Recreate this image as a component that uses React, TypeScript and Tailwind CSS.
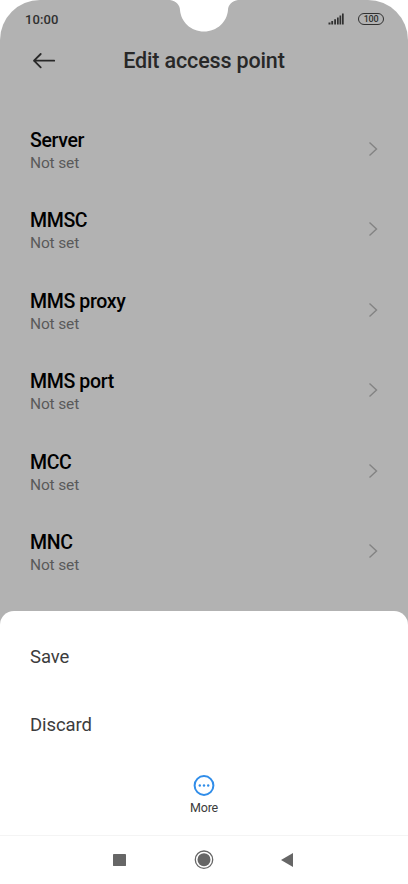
const settings = ["Server", "MMSC", "MMS proxy", "MMS port", "MCC", "MNC"];

function StatusBar() {
  return (
    <div className="relative flex h-[38px] items-center justify-between pl-[25px] pr-6 text-[#303030]">
      <span className="pt-[2px] text-[13px] font-medium leading-4 tracking-[0.1px]">10:00</span>
      <svg className="absolute left-[168px] top-0" width="72" height="32" viewBox="0 0 72 32" fill="#fff">
        <path d="M2 0C8 1 12 5 12 10C13 22 23 31.500 36 31.500C49 31.500 59 22 60 10C60 5 64 1 70 0Z" />
      </svg>
      <div className="flex items-center gap-[14px]">
        <svg width="16" height="12" viewBox="0 0 16 12" fill="#303030">
          <path d="M.5 9.500H2.500V11.500H.5zM3.300 8H5.100V11.500H3.300zM6.200 6.200H8V11.500H6.200zM9 4.500H10.700V11.500H9zM11.500 2.500H13.200V11.500H11.500zM14 .5H15.700V11.500H14z" />
        </svg>
        <span className="flex h-[12px] w-[26px] items-center justify-center rounded-full border border-[#303030] text-[9px] font-medium leading-none tracking-[-0.3px]">
          100
        </span>
      </div>
    </div>
  );
}

function Header() {
  return (
    <header className="grid h-[45px] grid-cols-[88px_1fr_88px] items-center">
      <svg className="ml-8" width="24" height="18" viewBox="0 0 24 18" fill="none" stroke="#282828" strokeWidth="1.800" strokeLinecap="round" strokeLinejoin="round">
        <path d="M22.200 8.700H2M8.700 2L2 8.700L8.700 15.400" />
      </svg>
      <h1 className="whitespace-nowrap text-center text-[21.500px] font-medium leading-6 tracking-[-0.15px] text-[#282828]">Edit access point</h1>
    </header>
  );
}

function SettingRow({ title }: { title: string }) {
  return (
    <li className="flex h-[80.500px] items-center justify-between pl-[30px] pr-[30px]">
      <div className="pt-[3px]">
        <div className="pt-px text-[19.500px] font-medium leading-6 tracking-[-0.35px] text-black">{title}</div>
        <div className="-mt-px text-[15.500px] leading-[22px] tracking-[-0.15px] text-[#5a5a5a]">Not set</div>
      </div>
      <svg className="-mt-px" width="10" height="16" viewBox="0 0 10 16" fill="none" stroke="#838383" strokeWidth="1.400">
        <path d="M1.500 1.500L8.500 8L1.500 14.500" />
      </svg>
    </li>
  );
}

export default function App() {
  return (
    <div className="h-[884px] w-[408px] overflow-hidden bg-white font-['Roboto',sans-serif]">
      <div className="flex h-full flex-col rounded-t-[40px] bg-[#b2b2b2]">
        <StatusBar />
        <Header />
        <ul className="mt-[26px] h-[502px] shrink-0">
          {settings.map((title) => (
            <SettingRow key={title} title={title} />
          ))}
        </ul>
        <div className="flex flex-1 flex-col rounded-t-[14px] bg-white">
          <div className="h-[224px] pt-[13px] text-[18.500px] tracking-[-0.1px] text-[#3c3c3c]">
            <div className="flex h-[68px] items-center px-[30px]">Save</div>
            <div className="flex h-[68px] items-center px-[30px]">Discard</div>
            <div className="mt-[15px] flex flex-col items-center">
              <svg width="22" height="22" viewBox="0 0 22 22" fill="none">
                <circle cx="11" cy="10.500" r="9.400" stroke="#308de9" strokeWidth="2" />
                <g fill="#308de9">
                  <circle cx="6.800" cy="10.500" r="1.200" />
                  <circle cx="11" cy="10.500" r="1.200" />
                  <circle cx="15.200" cy="10.500" r="1.200" />
                </g>
              </svg>
              <span className="mt-[3px] text-[12.500px] leading-4 tracking-[-0.2px]">More</span>
            </div>
          </div>
          <nav className="flex flex-1 items-center border-t border-[#f4f4f4] pb-px pl-[113px]">
            <svg width="13" height="12" viewBox="0 0 13 12" fill="#666">
              <rect width="13" height="12" rx=".4" />
            </svg>
            <svg className="ml-[68px]" width="20" height="20" viewBox="0 0 20 20">
              <circle cx="10" cy="9.700" r="8.700" fill="none" stroke="#666" strokeWidth="1.300" />
              <circle cx="10" cy="9.700" r="6.500" fill="#666" />
            </svg>
            <svg className="ml-[67px]" width="12" height="14" viewBox="0 0 12 14" fill="#666">
              <path d="M12 0V14L0 7z" />
            </svg>
          </nav>
        </div>
      </div>
    </div>
  );
}
